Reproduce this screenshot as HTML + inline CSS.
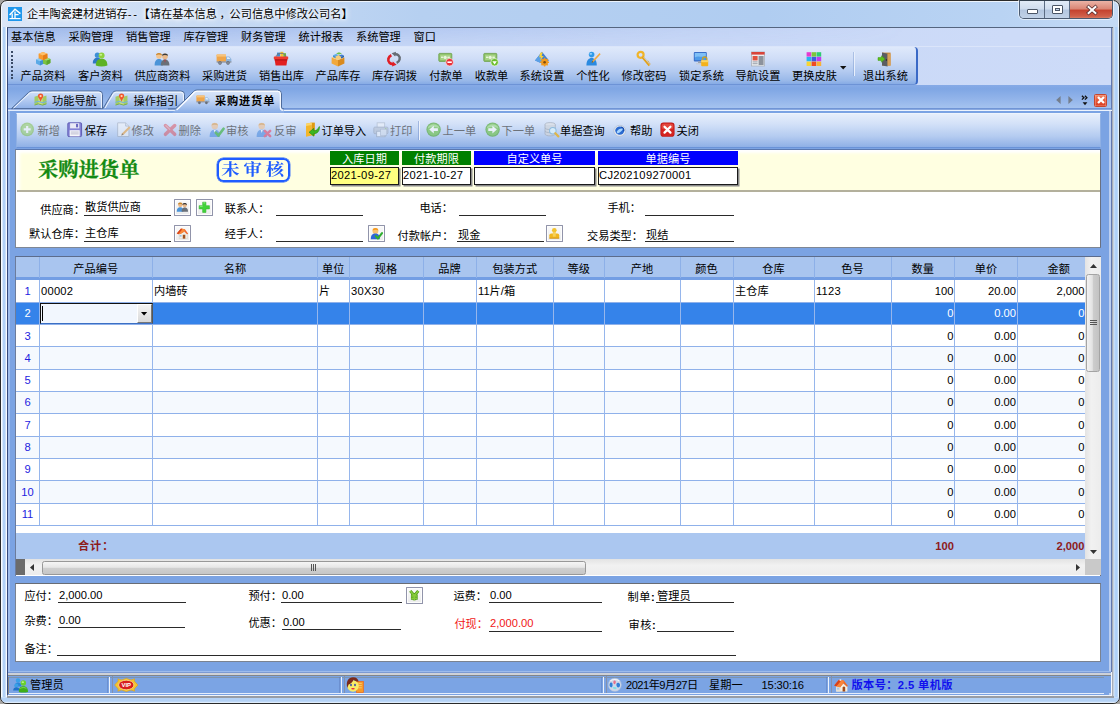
<!DOCTYPE html>
<html lang="zh-CN"><head><meta charset="utf-8"><title>企丰陶瓷建材进销存</title>
<style>
html,body{margin:0;padding:0}
body{width:1120px;height:704px;overflow:hidden;position:relative;background:#a7a5a3;font-family:"Liberation Sans","Noto Sans CJK SC",sans-serif;font-size:11.2px;color:#000;line-height:14px}
.a{position:absolute;box-sizing:border-box}
.t{white-space:nowrap;line-height:14px;height:14px}
.n{letter-spacing:.22px}
.c{transform:translateX(-50%)}
.g{color:#6c727b}
.b{font-weight:bold;letter-spacing:.9px}
.ul{border-bottom:1px solid #222}
svg{display:block;overflow:visible}
</style></head>
<body>
<div class="a" style="left:0px;top:0px;width:1120px;height:704px;border:1px solid #2a2a2a;border-radius:7px 7px 7px 7px;background:linear-gradient(to right,#dbe6f7 0,#cfdff5 120px,#b6d0f1 420px,#b0cdf1 760px,#b9d3f3 1000px,#c4daf5 1120px);box-shadow:inset 0 0 0 1px rgba(255,255,255,.75)"></div>
<div class="a" style="left:1px;top:27px;width:5.6px;height:671px;background:linear-gradient(to right,#fff 0,#f2f8fe 18%,#b2d1f6 36%,#b4d2f6 68%,#f4f9fe 86%,#fff 100%)"></div>
<div class="a" style="left:1113.4px;top:27px;width:5.6px;height:671px;background:linear-gradient(to right,#b4b8be 0,#d4e6fb 16%,#b2d2f8 34%,#aecff7 70%,#e4f2fe 90%,#f2fbff 100%)"></div>
<div class="a" style="left:1px;top:697px;width:1118px;height:6px;background:linear-gradient(to bottom,#cfe2f8 0,#b4d2f6 25%,#b4d2f6 70%,#eef6fe 100%);border-radius:0 0 6px 6px"></div>
<span class="a" style="left:8px;top:7px;line-height:0"><svg width="14" height="14" viewBox="0 0 14 14" ><rect x="0" y="0" width="14" height="14" fill="#1f97ec"/><path d="M1.6 8 L7 2.2 L12.4 6.6" fill="none" stroke="#fff" stroke-width="1.4"/><path d="M4.2 6.6 V11 M7 4.6 V11 M7 7.6 H10.6" fill="none" stroke="#fff" stroke-width="1.3"/><path d="M1.4 11.6 H12.6" stroke="#fff" stroke-width="1.2"/></svg></span>
<span class="a t" style="left:27px;top:7px;text-shadow:0 0 6px #fff,0 0 6px #fff,0 0 3px #fff">企丰陶瓷建材进销存<span style="letter-spacing:1.7px">--</span>【请在基本信息<span style="margin:0 -1.2px 0 2.6px">，</span>公司信息中修改公司名】</span>
<div class="a" style="left:1019px;top:0;width:94px;height:19px;border:1px solid #4b5a70;border-top-color:#33404f;border-radius:0 0 5px 5px;overflow:hidden;box-shadow:0 0 0 1px rgba(255,255,255,.55)"><div class="a" style="left:0;top:0;width:25px;height:18px;background:linear-gradient(to bottom,#e2ebf7 0,#cfdcee 45%,#b3c6df 50%,#c3d3e8 100%);border-right:1px solid #5b6b82"></div><div class="a" style="left:25px;top:0;width:25px;height:18px;background:linear-gradient(to bottom,#e2ebf7 0,#cfdcee 45%,#b3c6df 50%,#c3d3e8 100%);border-right:1px solid #5b6b82"></div><div class="a" style="left:50px;top:0;width:43px;height:18px;background:linear-gradient(to bottom,#eab3a6 0,#d98574 45%,#c4412d 50%,#d0604a 85%,#dc8a70 100%)"></div><div class="a" style="left:7px;top:8px;width:11px;height:5px;border:1px solid #4a5566;background:#fff;border-radius:1px"></div><div class="a" style="left:32px;top:4px;width:11px;height:9px;border:1px solid #4a5566;background:#fff;border-radius:1px"></div><div class="a" style="left:35px;top:7px;width:5px;height:3px;border:1px solid #4a5566;background:#c9d7ea"></div><span class="a" style="left:64.5px;top:3px;line-height:0"><svg width="14" height="12" viewBox="0 0 14 12" ><path d="M3.6 3 L10.4 9 M10.4 3 L3.6 9" stroke="#5a3030" stroke-width="3.6" stroke-linecap="square"/><path d="M3.6 3 L10.4 9 M10.4 3 L3.6 9" stroke="#fff" stroke-width="2" stroke-linecap="square"/></svg></span></div>
<div class="a" style="left:6.6px;top:27px;width:1106.4px;height:669px;border:1px solid #55657f;border-left:1.4px solid #36497a;border-right:0;border-bottom:1.2px solid #f0f5fc;background:#7ba3e3"></div>
<div class="a" style="left:6.6px;top:696px;width:1107px;height:1.6px;background:#979ca4"></div>
<div class="a" style="left:1109.3px;top:110px;width:1.4px;height:584.8px;background:#bccff0"></div>
<div class="a" style="left:8px;top:111px;width:1.8px;height:561px;background:#9fbdec"></div>
<div class="a" style="left:1110.7px;top:28px;width:1.5px;height:666.8px;background:#6278b0"></div>
<div class="a" style="left:1112.2px;top:28px;width:1.2px;height:668px;background:#a8aeb8"></div>
<div class="a" style="left:8px;top:28px;width:1102.7px;height:18px;background:linear-gradient(to right,#bbcef2 0,#c4d5f6 400px,#cddbf8 1000px)"></div>
<div class="a" style="left:8px;top:28px;width:900px;height:18px;background:linear-gradient(to bottom,rgba(105,145,220,.34) 0,rgba(105,145,220,.08) 70%,rgba(255,255,255,0) 100%);-webkit-mask-image:linear-gradient(to right,#000 0,rgba(0,0,0,.55) 40%,transparent 100%);mask-image:linear-gradient(to right,#000 0,rgba(0,0,0,.55) 40%,transparent 100%)"></div>
<span class="a t" style="left:11px;top:30px;">基本信息</span>
<span class="a t" style="left:68.5px;top:30px;">采购管理</span>
<span class="a t" style="left:126px;top:30px;">销售管理</span>
<span class="a t" style="left:183.5px;top:30px;">库存管理</span>
<span class="a t" style="left:241px;top:30px;">财务管理</span>
<span class="a t" style="left:298.5px;top:30px;">统计报表</span>
<span class="a t" style="left:356px;top:30px;">系统管理</span>
<span class="a t" style="left:413.5px;top:30px;">窗口</span>
<div class="a" style="left:8px;top:46px;width:1102.7px;height:39px;background:linear-gradient(to right,#c2d3f4 0,#cddbf8 100%)"></div>
<div class="a" style="left:8px;top:46px;width:1102.7px;height:1px;background:#dbe5fa"></div>
<div class="a" style="left:8px;top:47px;width:910px;height:38px;border-radius:0 4px 4px 0;background:linear-gradient(to bottom,#dfe9fb 0,#cfddf7 32%,#b3caf0 66%,#9ab9e9 90%,#86abe5 100%);border-right:2px solid #3a69c6;border-bottom:1px solid #6d93d6"></div>
<div class="a" style="left:11px;top:51px;width:2px;height:2px;background:#3a4a66"></div>
<div class="a" style="left:11px;top:54.75px;width:2px;height:2px;background:#3a4a66"></div>
<div class="a" style="left:11px;top:58.5px;width:2px;height:2px;background:#3a4a66"></div>
<div class="a" style="left:11px;top:62.25px;width:2px;height:2px;background:#3a4a66"></div>
<div class="a" style="left:11px;top:66px;width:2px;height:2px;background:#3a4a66"></div>
<div class="a" style="left:11px;top:69.75px;width:2px;height:2px;background:#3a4a66"></div>
<div class="a" style="left:11px;top:73.5px;width:2px;height:2px;background:#3a4a66"></div>
<div class="a" style="left:11px;top:77.25px;width:2px;height:2px;background:#3a4a66"></div>
<span class="a" style="left:34.5px;top:51px;line-height:0"><svg width="16" height="16" viewBox="0 0 16 16" ><path d="M1 8.6 L5 7 L9 8.6 V12.6 L5 14.6 L1 12.6Z" fill="#5aa9e6"/><path d="M1 8.6 L5 10.2 L9 8.6 L5 7Z" fill="#8fcaf3"/><path d="M5 10.2 V14.6 L9 12.6 V8.6Z" fill="#3f8fd4"/><path d="M8 8.2 L12 6.6 L15.4 8 V12 L11.6 14 L8 12.4Z" fill="#7cc242"/><path d="M11.6 9.6 V14 L15.4 12 V8Z" fill="#5da52c"/><path d="M8 8.2 L11.6 9.6 L15.4 8 L12 6.6Z" fill="#a6dc72"/><path d="M3.6 2.8 L8 1 L12.4 2.8 V7.2 L8 9.2 L3.6 7.2Z" fill="#f79a2e"/><path d="M3.6 2.8 L8 4.6 L12.4 2.8 L8 1Z" fill="#fdbf6a"/><path d="M8 4.6 V9.2 L12.4 7.2 V2.8Z" fill="#e67e17"/></svg></span>
<span class="a t c" style="left:43px;top:68.5px;">产品资料</span>
<span class="a" style="left:92px;top:51px;line-height:0"><svg width="16" height="16" viewBox="0 0 16 16" ><circle cx="5.4" cy="4.2" r="2.6" fill="#3d8fd6"/><path d="M0.8 12.4 C0.8 8 3.2 6.8 5.4 6.8 C7.6 6.8 9.6 8 9.6 12.4Z" fill="#2f78c2"/><circle cx="9.6" cy="4.6" r="3" fill="#8ed13e"/><path d="M3.8 14.6 C3.8 9.4 6.6 7.8 9.6 7.8 C12.6 7.8 15.4 9.4 15.4 14.6 C12 15.8 7 15.8 3.8 14.6Z" fill="#5db224"/><ellipse cx="8.8" cy="3.8" rx="1.4" ry="1" fill="#c8ee90"/></svg></span>
<span class="a t c" style="left:100.5px;top:68.5px;">客户资料</span>
<span class="a" style="left:154px;top:51px;line-height:0"><svg width="16" height="16" viewBox="0 0 16 16" ><circle cx="5" cy="5" r="2.8" fill="#f3c48e"/><path d="M2 4.2 C2 1.4 8 1.4 8 4.4 C6.4 3.4 4 3.2 2 4.2Z" fill="#c8862c"/><path d="M0.6 14.4 C0.6 9.6 2.6 8 5 8 C7.4 8 9 9.6 9 14.4Z" fill="#4b94d8"/><circle cx="11" cy="5.4" r="2.8" fill="#e9b98a"/><path d="M8 4.8 C8 1.6 14 1.6 14 4.8 C12.4 3.8 9.8 3.6 8 4.8Z" fill="#3a3a3a"/><path d="M6.8 14.6 C6.8 10 8.6 8.4 11 8.4 C13.4 8.4 15.4 10 15.4 14.6Z" fill="#6a7078"/><path d="M10.4 8.6 L11 12 L11.6 8.6Z" fill="#c33"/></svg></span>
<span class="a t c" style="left:162.5px;top:68.5px;">供应商资料</span>
<span class="a" style="left:216px;top:51px;line-height:0"><svg width="16" height="16" viewBox="0 0 16 16" ><rect x="0.6" y="3.4" width="9.4" height="7.4" rx="0.8" fill="#f0a64a"/><rect x="0.6" y="3.4" width="9.4" height="2.2" fill="#f7c47c"/><path d="M10 5.4 H13.4 L15.4 8 V10.8 H10Z" fill="#8fb4dc"/><path d="M11 6.2 H13 L14.4 8 H11Z" fill="#dcebf8"/><rect x="0.6" y="10.4" width="14.8" height="1.2" fill="#8a8f98"/><circle cx="4" cy="12" r="1.7" fill="#555b66"/><circle cx="12" cy="12" r="1.7" fill="#555b66"/><circle cx="4" cy="12" r="0.7" fill="#cfd4da"/><circle cx="12" cy="12" r="0.7" fill="#cfd4da"/></svg></span>
<span class="a t c" style="left:224.5px;top:68.5px;">采购进货</span>
<span class="a" style="left:273px;top:51px;line-height:0"><svg width="16" height="16" viewBox="0 0 16 16" ><rect x="4" y="1.6" width="3" height="4" fill="#3f8fd4"/><rect x="7.4" y="0.8" width="3" height="5" fill="#f0c330"/><rect x="10.4" y="2.2" width="2.6" height="4" fill="#6cbf3a"/><path d="M3 6 C3 1 13 1 13 6" fill="none" stroke="#777" stroke-width="1"/><rect x="0.8" y="5.4" width="14.4" height="2.8" rx="0.6" fill="#f03a2e"/><path d="M1.6 8.2 H14.4 L13.4 14.6 H2.6Z" fill="#e21f1f"/><path d="M1.6 8.2 H14.4 L14.2 9.6 H1.8Z" fill="#b31313"/></svg></span>
<span class="a t c" style="left:281.5px;top:68.5px;">销售出库</span>
<span class="a" style="left:329.5px;top:51px;line-height:0"><svg width="16" height="16" viewBox="0 0 16 16" ><path d="M1.6 6.4 L8 9 V15.4 L1.6 12.6Z" fill="#f2a93c"/><path d="M8 9 L14.4 6.4 V12.6 L8 15.4Z" fill="#d98a1e"/><path d="M1.6 6.4 L8 3.8 L14.4 6.4 L8 9Z" fill="#f8cc7a"/><path d="M3 4.2 L6 3 L8.6 4 L5.6 5.4Z" fill="#5aa9e6"/><path d="M6 2.4 L9 1.2 L12 2.4 L9 3.6Z" fill="#6cc04a"/><path d="M8.8 4.6 L11.8 3.4 L14 4.4 L11 5.8Z" fill="#3d7fd0"/><path d="M3 4.2 V6 L5.6 7.2 V5.4Z" fill="#3f8fd4"/><path d="M11 5.8 V7.4 L14 6.2 V4.4Z" fill="#2c62b0"/></svg></span>
<span class="a t c" style="left:338px;top:68.5px;">产品库存</span>
<span class="a" style="left:386px;top:51px;line-height:0"><svg width="16" height="16" viewBox="0 0 16 16" ><path d="M8.4 3.4 C11.6 2.6 14.4 5 13.6 8.4 C13.2 10 12 11.2 10.6 11.8" fill="none" stroke="#666c74" stroke-width="2.4"/><path d="M5.6 2.2 L10 0.8 L9.2 5.6Z" fill="#666c74"/><path d="M7.6 12.8 C4.4 13.6 1.6 11 2.4 7.6 C2.8 6 4 4.8 5.4 4.2" fill="none" stroke="#e01f26" stroke-width="2.6"/><path d="M10.6 13.8 L6 15.4 L6.8 10.4Z" fill="#e01f26"/></svg></span>
<span class="a t c" style="left:394.5px;top:68.5px;">库存调拨</span>
<span class="a" style="left:437.5px;top:51px;line-height:0"><svg width="16" height="16" viewBox="0 0 16 16" ><rect x="0.8" y="2.4" width="13" height="8" rx="0.8" fill="#8fc26a" stroke="#6aa046" stroke-width="0.8"/><rect x="2.2" y="3.8" width="10.2" height="5.2" fill="#a9d487"/><circle cx="7.2" cy="6.4" r="1.6" fill="#e8f5da"/><rect x="3" y="5.6" width="2.4" height="1.4" fill="#e8f5da"/><rect x="9.4" y="5.6" width="2.4" height="1.4" fill="#e8f5da"/><circle cx="11.6" cy="11.2" r="3.8" fill="#e8303a" stroke="#fff" stroke-width="0.6"/><rect x="9.4" y="10.4" width="4.4" height="1.6" fill="#fff"/></svg></span>
<span class="a t c" style="left:446px;top:68.5px;">付款单</span>
<span class="a" style="left:483px;top:51px;line-height:0"><svg width="16" height="16" viewBox="0 0 16 16" ><rect x="0.8" y="2.4" width="13" height="8" rx="0.8" fill="#8fc26a" stroke="#6aa046" stroke-width="0.8"/><rect x="2.2" y="3.8" width="10.2" height="5.2" fill="#a9d487"/><circle cx="7.2" cy="6.4" r="1.6" fill="#e8f5da"/><rect x="3" y="5.6" width="2.4" height="1.4" fill="#e8f5da"/><rect x="9.4" y="5.6" width="2.4" height="1.4" fill="#e8f5da"/><circle cx="11.6" cy="11.2" r="3.8" fill="#6cbe2e" stroke="#fff" stroke-width="0.6"/><path d="M9.4 10.2 H13.8 L11.6 13.6Z" fill="#fff"/></svg></span>
<span class="a t c" style="left:491.5px;top:68.5px;">收款单</span>
<span class="a" style="left:533.5px;top:51px;line-height:0"><svg width="16" height="16" viewBox="0 0 16 16" ><path d="M8 0.8 L15 9.6 L8 12.4 L1 9.6Z" fill="#3f7fd0"/><path d="M8 0.8 L8 12.4 L1 9.6Z" fill="#5aa0e6"/><path d="M6.2 1.8 L8.8 1.2 L7.6 5 L9.8 5 L6 9.6 L7 6.2 L5.2 6.2Z" fill="#f6d13a"/><circle cx="10.6" cy="11.2" r="3.4" fill="#f29a1e"/><circle cx="10.6" cy="11.2" r="1.3" fill="#7a4a10"/><path d="M10.6 6.8 V15.6 M6.2 11.2 H15 M7.5 8.1 L13.7 14.3 M13.7 8.1 L7.5 14.3" stroke="#f29a1e" stroke-width="1.5"/><circle cx="10.6" cy="11.2" r="1.3" fill="#7a4a10"/></svg></span>
<span class="a t c" style="left:542px;top:68.5px;">系统设置</span>
<span class="a" style="left:584.5px;top:51px;line-height:0"><svg width="16" height="16" viewBox="0 0 16 16" ><circle cx="6.6" cy="3.6" r="2.8" fill="#2f9ae8"/><path d="M1.4 14.6 C1.4 9 3.8 7 6.6 7 C9.4 7 11.8 9 11.8 14.6Z" fill="#2b8ae0"/><ellipse cx="5.8" cy="2.8" rx="1.4" ry="0.9" fill="#9ad3fb"/><path d="M14.6 2 L15.6 3.2 L8.4 11 L6.6 11.8 L7.2 10Z" fill="#f2a93c"/><path d="M6.6 11.8 L7.2 10 L8.4 11Z" fill="#5a4a2a"/></svg></span>
<span class="a t c" style="left:593px;top:68.5px;">个性化</span>
<span class="a" style="left:635.5px;top:51px;line-height:0"><svg width="16" height="16" viewBox="0 0 16 16" ><circle cx="4.6" cy="3.8" r="3" fill="none" stroke="#f0b429" stroke-width="2.2"/><path d="M6.4 6 L13.6 14.4" stroke="#e3a21a" stroke-width="2.4"/><path d="M10.4 11.6 L12.4 10 M12 13.6 L14 12" stroke="#e3a21a" stroke-width="1.6"/><path d="M7.6 6.2 L14.4 14" stroke="#c9cdd4" stroke-width="0.9"/></svg></span>
<span class="a t c" style="left:644px;top:68.5px;">修改密码</span>
<span class="a" style="left:693px;top:51px;line-height:0"><svg width="16" height="16" viewBox="0 0 16 16" ><rect x="0.8" y="1" width="13" height="9.4" rx="1" fill="#3a6fc8"/><rect x="1.8" y="2" width="11" height="7.2" fill="#4f9be8"/><path d="M1.8 2 H12.8 V5 C9 7 5 4 1.8 6.4Z" fill="#7fc0f6"/><rect x="5" y="10.4" width="4.6" height="1.8" fill="#9aa3b0"/><rect x="3" y="12" width="8.6" height="1.4" rx="0.6" fill="#c7ccd4"/><path d="M9.6 9.4 V7.8 C9.6 5.4 13.8 5.4 13.8 7.8 V9.4" fill="none" stroke="#c9a227" stroke-width="1.4"/><rect x="8.2" y="9.2" width="7" height="6" rx="0.8" fill="#f4b21c"/><rect x="8.2" y="9.2" width="7" height="2" fill="#fad565"/></svg></span>
<span class="a t c" style="left:701.5px;top:68.5px;">锁定系统</span>
<span class="a" style="left:749.5px;top:51px;line-height:0"><svg width="16" height="16" viewBox="0 0 16 16" ><rect x="1.4" y="1" width="13.2" height="14" fill="#eceef1" stroke="#a9afb8" stroke-width="0.8"/><rect x="1.4" y="1" width="13.2" height="2.6" fill="#d8443a"/><rect x="2.6" y="5" width="5" height="4.4" fill="#e0523f"/><rect x="8.6" y="5" width="5" height="9" fill="#8c929c"/><rect x="2.6" y="10.4" width="5" height="1" fill="#9aa0aa"/><rect x="2.6" y="12.2" width="5" height="1" fill="#9aa0aa"/></svg></span>
<span class="a t c" style="left:758px;top:68.5px;">导航设置</span>
<span class="a" style="left:806px;top:51px;line-height:0"><svg width="16" height="16" viewBox="0 0 16 16" ><rect x="0.6" y="1.2" width="4.6" height="4.4" fill="#e63ad0"/><rect x="5.6" y="1.2" width="4.6" height="4.4" fill="#7dc63a"/><rect x="10.6" y="1.2" width="4.6" height="4.4" fill="#2ecc71"/><rect x="0.6" y="5.9" width="4.6" height="4.4" fill="#29b4f0"/><rect x="5.6" y="5.9" width="4.6" height="4.4" fill="#3d5be0"/><rect x="10.6" y="5.9" width="4.6" height="4.4" fill="#c03bf0"/><rect x="0.6" y="10.6" width="4.6" height="4.4" fill="#f8d531"/><rect x="5.6" y="10.6" width="4.6" height="4.4" fill="#f04a22"/><rect x="10.6" y="10.6" width="4.6" height="4.4" fill="#fbb034"/></svg></span>
<span class="a t c" style="left:814.5px;top:68.5px;">更换皮肤</span>
<span class="a" style="left:877px;top:51px;line-height:0"><svg width="16" height="16" viewBox="0 0 16 16" ><path d="M5 1.6 H13.6 V14.6 H5Z" fill="#c98a3e"/><path d="M5 1.6 L10.6 2.8 V15.4 L5 14.6Z" fill="#5b5e63"/><path d="M10.6 2.8 H13.6 V14.6 H10.6Z" fill="#d9a25a"/><circle cx="9.4" cy="9" r="0.7" fill="#222"/><path d="M1 6.6 H4.4 V4.8 L8 8 L4.4 11.2 V9.4 H1Z" fill="#5fc21e" stroke="#3f9a10" stroke-width="0.5"/></svg></span>
<span class="a t c" style="left:885.5px;top:68.5px;">退出系统</span>
<span class="a" style="left:840.2px;top:66px;line-height:0"><svg width="6.4" height="3.6" viewBox="0 0 6.4 3.6"><path d="M0 0 H6.4 L3.2 3.6Z" fill="#111"/></svg></span>
<div class="a" style="left:853.5px;top:52px;width:1.4px;height:24px;background:#e9f0fc;box-shadow:-1px 0 0 rgba(120,150,205,.45)"></div>
<div class="a" style="left:8px;top:85px;width:1102.7px;height:25px;background:linear-gradient(to bottom,#86aae6 0,#7fa6e4 15%,#92b4ea 55%,#a9c6f0 100%)"></div>
<span class="a" style="left:8px;top:85px;line-height:0"><svg width="1104" height="28" viewBox="0 0 1104 28" ><defs><linearGradient id="tg" x1="0" y1="0" x2="0" y2="1"><stop offset="0" stop-color="#d3e2f8"/><stop offset="0.5" stop-color="#b4cbf1"/><stop offset="1" stop-color="#8fb1e8"/></linearGradient><linearGradient id="ta" x1="0" y1="0" x2="0" y2="1"><stop offset="0" stop-color="#dbe7fa"/><stop offset="0.45" stop-color="#c3d6f5"/><stop offset="1" stop-color="#86abe6"/></linearGradient></defs><rect x="0" y="23.2" width="168" height="1.3" fill="#5a82cc"/><rect x="0" y="24.7" width="168" height="1.2" fill="#eef4fd"/><rect x="275" y="23.3" width="829" height="1.4" fill="#5a82cc"/><rect x="275" y="24.8" width="829" height="1.2" fill="#eef4fd"/><path d="M3.5 23.6 L20.5 7.5 Q22 6 24 6 H91 Q94.5 6 94.5 9.5 V23.6Z" fill="url(#tg)" stroke="#4e6c9c" stroke-width="1"/><path d="M5.6 23.2 L21.4 8.3 Q22.4 7.2 24 7.2 H91 Q93.4 7.2 93.4 9.6 V23.2" fill="none" stroke="#f2f7fe" stroke-width="1"/><path d="M95 23.6 L99.5 16 L104.6 7.6 Q105.8 6 108 6 H173 Q176.5 6 176.5 9.5 V20 L168 23.6Z" fill="url(#tg)"/><path d="M95 23.6 L99.5 16 L104.6 7.6 Q105.8 6 108 6 H173 Q176.5 6 176.5 9.5 V16" fill="none" stroke="#4e6c9c" stroke-width="1"/><path d="M97 23.2 L101 16.2 L105.8 8.4 Q106.8 7.2 108.4 7.2 H173 Q175.4 7.2 175.4 9.6 V17" fill="none" stroke="#f2f7fe" stroke-width="1"/><path d="M164 28 L168 24.7 L177 15 L185.5 6.5 Q187 5 189 5 H269.5 Q273.5 5 273.5 9 V22 Q273.5 24.3 276 24.3 V28Z" fill="url(#ta)"/><path d="M160 23.9 H167.4 L177 15 L185.5 6.5 Q187 5 189 5 H269.5 Q273.5 5 273.5 9 V22 Q273.5 24 276 24" fill="none" stroke="#4e6c9c" stroke-width="1"/><path d="M168.6 25.2 L178 16 L186.4 7.4 Q187.4 6.3 189 6.3 H269.4 Q272.3 6.3 272.3 9.2 V22.4 Q272.3 25.3 275.4 25.3" fill="none" stroke="#fff" stroke-width="1.1"/></svg></span>
<span class="a t" style="left:52px;top:94px;">功能导航</span>
<span class="a t" style="left:133.5px;top:94px;">操作指引</span>
<span class="a t" style="left:215px;top:93.5px;font-weight:bold;letter-spacing:.85px">采购进货单</span>
<span class="a" style="left:33.5px;top:93.3px;line-height:0"><svg width="13" height="13" viewBox="0 0 15 15" ><path d="M0.6 4.4 L5 3 L10 4.4 L14.4 3 V12.6 L10 14 L5 12.6 L0.6 14Z" fill="#a4cc62"/><path d="M5 3 L10 4.4 V14 L5 12.6Z" fill="#c6dc82"/><path d="M0.6 10.4 L5 9 L10 10.6 L14.4 9.2 V10.4 L10 11.8 L5 10.2 L0.6 11.6Z" fill="#6fb1e0"/><path d="M0.6 14 L5 12.6 L10 14 L14.4 12.6" fill="none" stroke="#6aa23a" stroke-width="0.8"/><path d="M7.6 0.6 C5.4 0.6 4.4 2.2 4.6 3.8 C4.8 5.6 6.8 7 7.6 10 C8.4 7 10.4 5.6 10.6 3.8 C10.8 2.2 9.8 0.6 7.6 0.6Z" fill="#f0562a"/><circle cx="7.6" cy="3.6" r="1.3" fill="#ffd9b0"/></svg></span>
<span class="a" style="left:115px;top:93.3px;line-height:0"><svg width="13" height="13" viewBox="0 0 15 15" ><path d="M0.6 4.4 L5 3 L10 4.4 L14.4 3 V12.6 L10 14 L5 12.6 L0.6 14Z" fill="#a4cc62"/><path d="M5 3 L10 4.4 V14 L5 12.6Z" fill="#c6dc82"/><path d="M0.6 10.4 L5 9 L10 10.6 L14.4 9.2 V10.4 L10 11.8 L5 10.2 L0.6 11.6Z" fill="#6fb1e0"/><path d="M0.6 14 L5 12.6 L10 14 L14.4 12.6" fill="none" stroke="#6aa23a" stroke-width="0.8"/><path d="M7.6 0.6 C5.4 0.6 4.4 2.2 4.6 3.8 C4.8 5.6 6.8 7 7.6 10 C8.4 7 10.4 5.6 10.6 3.8 C10.8 2.2 9.8 0.6 7.6 0.6Z" fill="#f0562a"/><circle cx="7.6" cy="3.6" r="1.3" fill="#ffd9b0"/></svg></span>
<span class="a" style="left:196.3px;top:94.6px;line-height:0"><svg width="14" height="10" viewBox="0 0 14 10" ><rect x="0.4" y="0.6" width="8.4" height="6.2" rx="0.7" fill="#f0a64a"/><rect x="0.4" y="0.6" width="8.4" height="1.8" fill="#f7c47c"/><path d="M8.8 2.2 H11.6 L13.4 4.4 V6.8 H8.8Z" fill="#9fc0e4"/><path d="M9.6 2.9 H11.3 L12.5 4.4 H9.6Z" fill="#e6f0fa"/><rect x="0.4" y="6.4" width="13" height="1" fill="#8a8f98"/><circle cx="3.4" cy="7.8" r="1.4" fill="#6a707a"/><circle cx="10.4" cy="7.8" r="1.4" fill="#6a707a"/></svg></span>
<span class="a" style="left:1055.6px;top:96px;line-height:0"><svg width="5" height="8" viewBox="0 0 5 8" ><path d="M4.6 0 V8 L0.2 4Z" fill="#747e8c"/></svg></span><span class="a" style="left:1068.4px;top:96px;line-height:0"><svg width="5" height="8" viewBox="0 0 5 8" ><path d="M0.4 0 V8 L4.8 4Z" fill="#747e8c"/></svg></span><span class="a" style="left:1080.6px;top:94.8px;line-height:0"><svg width="7" height="11" viewBox="0 0 7 11" ><path d="M0.9 0.8 L2.9 2.7 L0.9 4.6 M3.9 0.8 L5.9 2.7 L3.9 4.6" fill="none" stroke="#111" stroke-width="1.3"/><path d="M1.6 7.2 H6.4 L4 10.2Z" fill="#111"/></svg></span><div class="a" style="left:1094px;top:94px;width:13.1px;height:12.8px;background:linear-gradient(to bottom,#f08462 0,#e65a3a 45%,#da3c22 100%);border:1px solid #c8452c;border-radius:1.5px;box-shadow:inset 0 0 0 .6px rgba(255,200,180,.55)"></div><span class="a" style="left:1096.6px;top:96.4px;line-height:0"><svg width="8" height="8" viewBox="0 0 8 8" ><path d="M1 1 L7 7 M7 1 L1 7" stroke="#fff" stroke-width="2.3"/></svg></span>
<div class="a" style="left:15.6px;top:113px;width:1085.7px;height:35px;background:linear-gradient(to bottom,#e6eefb 0,#d3e1f8 30%,#b4cbf0 68%,#8fb0e6 100%);border:1px solid #8fb0e4;border-top-color:#eef4fd;border-bottom-color:#6a93d8"></div>
<span class="a" style="left:20px;top:122.4px;line-height:0"><svg width="15.4" height="15.4" viewBox="0 0 15 15" ><g opacity="0.55"><circle cx="7" cy="7.2" r="6.6" fill="#7fbe48"/><circle cx="7" cy="7.2" r="5.4" fill="#94cf62"/><path d="M7 3.8 V10.6 M3.6 7.2 H10.4" stroke="#fff" stroke-width="2.1"/></g></svg></span>
<span class="a t g" style="left:37.5px;top:123.6px;">新增</span>
<span class="a" style="left:67px;top:122.4px;line-height:0"><svg width="15.4" height="15.4" viewBox="0 0 15 15" ><g ><rect x="0.8" y="0.8" width="13.4" height="13.4" rx="1" fill="#8583d6" stroke="#5a58b0" stroke-width="0.9"/><rect x="3" y="1.2" width="9" height="5" fill="#e9e9f6"/><rect x="8.8" y="1.8" width="2" height="3.4" fill="#6a68c0"/><rect x="2.6" y="8" width="9.8" height="6" fill="#f7f7fb"/><path d="M3.6 9.8 H11.4 M3.6 11.6 H11.4" stroke="#aeb0c8" stroke-width="0.8"/></g></svg></span>
<span class="a t" style="left:84.8px;top:123.6px;">保存</span>
<span class="a" style="left:116px;top:122.4px;line-height:0"><svg width="15.4" height="15.4" viewBox="0 0 15 15" ><g opacity="0.55"><path d="M1.6 0.8 H9.4 L12.6 4 V14.2 H1.6Z" fill="#f4f6f9" stroke="#9aa4b4" stroke-width="0.9"/><path d="M9.4 0.8 V4 H12.6" fill="#dfe5ee" stroke="#9aa4b4" stroke-width="0.8"/><path d="M12.8 4.2 L14.2 5.6 L7.4 12.4 L5.2 13.2 L6 11Z" fill="#f0a030"/><path d="M5.2 13.2 L6 11 L7.4 12.4Z" fill="#6a4a20"/></g></svg></span>
<span class="a t g" style="left:131.5px;top:123.6px;">修改</span>
<span class="a" style="left:162.5px;top:122.4px;line-height:0"><svg width="15.4" height="15.4" viewBox="0 0 15 15" ><g opacity="0.42"><path d="M2.4 3.4 L11.4 12 M11.4 3.4 L2.4 12" stroke="#e0303a" stroke-width="3.4" stroke-linecap="round"/><path d="M2.8 3.6 L6.6 7.2" stroke="#f58a8a" stroke-width="1.1" stroke-linecap="round"/></g></svg></span>
<span class="a t g" style="left:178.5px;top:123.6px;">删除</span>
<span class="a" style="left:209px;top:122.4px;line-height:0"><svg width="15.4" height="15.4" viewBox="0 0 15 15" ><g opacity="0.6"><circle cx="5.6" cy="4" r="3.2" fill="#f0c090"/><path d="M2.4 3.4 C2.6 0.2 8.6 0.2 8.8 3.4 C7 2.4 4.4 2.4 2.4 3.4Z" fill="#d89a4a"/><path d="M0.6 14.6 C0.6 9.4 2.8 7.6 5.6 7.6 C8.4 7.6 10.6 9.4 10.6 14.6Z" fill="#4f8fe0"/><path d="M4.6 7.8 L5.6 10.6 L6.6 7.8Z" fill="#fff"/><path d="M6.6 10.4 L9.2 13.2 L14.2 6.6" fill="none" stroke="#2fae2f" stroke-width="2.6" stroke-linecap="round" stroke-linejoin="round"/></g></svg></span>
<span class="a t g" style="left:226px;top:123.6px;">审核</span>
<span class="a" style="left:256px;top:122.4px;line-height:0"><svg width="15.4" height="15.4" viewBox="0 0 15 15" ><g opacity="0.6"><circle cx="5.6" cy="4" r="3.2" fill="#f0c090"/><path d="M2.4 3.4 C2.6 0.2 8.6 0.2 8.8 3.4 C7 2.4 4.4 2.4 2.4 3.4Z" fill="#d89a4a"/><path d="M0.6 14.6 C0.6 9.4 2.8 7.6 5.6 7.6 C8.4 7.6 10.6 9.4 10.6 14.6Z" fill="#4f8fe0"/><path d="M4.6 7.8 L5.6 10.6 L6.6 7.8Z" fill="#fff"/><path d="M8.6 8.6 L13.8 13.8 M13.8 8.6 L8.6 13.8" stroke="#e6486a" stroke-width="2.5" stroke-linecap="round"/></g></svg></span>
<span class="a t g" style="left:274px;top:123.6px;">反审</span>
<span class="a" style="left:305px;top:122.4px;line-height:0"><svg width="15.4" height="15.4" viewBox="0 0 15 15" ><g ><path d="M1 1.6 L6.6 0.6 V13.2 L1 14.4Z" fill="#f4b62a"/><path d="M6.6 0.6 H9.6 V13.2 H6.6Z" fill="#e09a10"/><path d="M1 1.6 L6.6 0.6 L6.6 3 L1 4Z" fill="#fbd56a"/><path d="M14 4.4 C14.4 9 12 11.4 8.6 11.4 V13.8 L4 10 L8.6 6.2 V8.6 C10.6 8.6 12.6 7.4 14 4.4Z" fill="#3cb521" stroke="#1f8a0c" stroke-width="0.6"/></g></svg></span>
<span class="a t" style="left:321.5px;top:123.6px;">订单导入</span>
<span class="a" style="left:372.5px;top:122.4px;line-height:0"><svg width="15.4" height="15.4" viewBox="0 0 15 15" ><g opacity="0.5"><rect x="4" y="0.8" width="7.4" height="5" fill="#f4f6f9" stroke="#9aa4b4" stroke-width="0.8"/><rect x="0.8" y="5" width="13.8" height="6.4" rx="1" fill="#b8c0cc" stroke="#8791a1" stroke-width="0.8"/><rect x="3.6" y="9" width="8.2" height="5.4" fill="#fff" stroke="#8791a1" stroke-width="0.8"/><circle cx="12.4" cy="7" r="0.8" fill="#5fc21e"/><rect x="7.4" y="7" width="6" height="6" fill="#dfe4ec" stroke="#9aa4b4" stroke-width="0.6"/></g></svg></span>
<span class="a t g" style="left:390px;top:123.6px;">打印</span>
<span class="a" style="left:426px;top:122.4px;line-height:0"><svg width="15.4" height="15.4" viewBox="0 0 15 15" ><g opacity="0.62"><circle cx="7.4" cy="7.4" r="7" fill="#4aa32a"/><circle cx="7.4" cy="7.4" r="6" fill="#6cc244"/><path d="M1.6 6 C3 1.4 11.8 1.4 13.2 6 C10 4.4 5 4.4 1.6 6Z" fill="#a6e08a" opacity=".8"/><path d="M3.2 7.4 L7.6 3.6 V6 H11.6 V8.8 H7.6 V11.2Z" fill="#fff"/></g></svg></span>
<span class="a t g" style="left:442.5px;top:123.6px;">上一单</span>
<span class="a" style="left:485px;top:122.4px;line-height:0"><svg width="15.4" height="15.4" viewBox="0 0 15 15" ><g opacity="0.62"><circle cx="7.4" cy="7.4" r="7" fill="#4aa32a"/><circle cx="7.4" cy="7.4" r="6" fill="#6cc244"/><path d="M1.6 6 C3 1.4 11.8 1.4 13.2 6 C10 4.4 5 4.4 1.6 6Z" fill="#a6e08a" opacity=".8"/><path d="M11.6 7.4 L7.2 3.6 V6 H3.2 V8.8 H7.2 V11.2Z" fill="#fff"/></g></svg></span>
<span class="a t g" style="left:501.5px;top:123.6px;">下一单</span>
<span class="a" style="left:544px;top:122.4px;line-height:0"><svg width="15.4" height="15.4" viewBox="0 0 15 15" ><g opacity="0.8"><ellipse cx="6" cy="2.6" rx="5" ry="2" fill="#dfe3ea" stroke="#9aa2b0" stroke-width="0.7"/><path d="M1 2.6 V11.6 C1 14.2 11 14.2 11 11.6 V2.6" fill="#cfd5de" stroke="#9aa2b0" stroke-width="0.7"/><path d="M1 5.6 C1 8 11 8 11 5.6 M1 8.6 C1 11 11 11 11 8.6" fill="none" stroke="#9aa2b0" stroke-width="0.7"/><circle cx="8.6" cy="8.6" r="3.2" fill="#d9f0fb" stroke="#7fb4d8" stroke-width="1"/><path d="M11 11 L14 14" stroke="#e8b020" stroke-width="2.2" stroke-linecap="round"/></g></svg></span>
<span class="a t" style="left:560px;top:123.6px;">单据查询</span>
<span class="a" style="left:613px;top:122.4px;line-height:0"><svg width="15.4" height="15.4" viewBox="0 0 15 15" ><g ><ellipse cx="6.6" cy="8.6" rx="5.8" ry="5.4" fill="#e4e9f2" stroke="#b4bfd0" stroke-width="0.7"/><ellipse cx="6.6" cy="8.4" rx="4.4" ry="4.1" fill="#2a6ad0"/><path d="M3.6 9.6 C4.6 6.8 8 5.8 9.8 6.4 C9 8.6 7 10.6 4.2 11.2Z" fill="#a8d6ff"/><path d="M8 4.8 C9.8 5.4 10.8 7.2 10.4 9" fill="none" stroke="#174aa8" stroke-width="1.1"/></g></svg></span>
<span class="a t" style="left:630px;top:123.6px;">帮助</span>
<span class="a" style="left:659.5px;top:122.4px;line-height:0"><svg width="15.4" height="15.4" viewBox="0 0 15 15" ><g ><rect x="0.4" y="0.6" width="13.8" height="13.8" rx="3" fill="#c01a18"/><rect x="1.1" y="1.3" width="12.4" height="12.4" rx="2.4" fill="#d42420"/><rect x="1.6" y="1.6" width="11.4" height="5.4" rx="2.2" fill="#e8584c" opacity=".7"/><path d="M4.4 4.6 L10.2 10.4 M10.2 4.6 L4.4 10.4" stroke="#fff" stroke-width="2.2" stroke-linecap="round"/></g></svg></span>
<span class="a t" style="left:676.5px;top:123.6px;">关闭</span>
<div class="a" style="left:419.2px;top:121px;width:1.2px;height:19px;background:#eef3fc;box-shadow:-1px 0 0 rgba(110,140,200,.5)"></div>
<div class="a" style="left:15px;top:149px;width:1086.3px;height:99px;background:#fff;border:1px solid #7f8794;border-top-color:#5a78b0;border-right-color:#6a7080"></div>
<div class="a" style="left:17px;top:150.5px;width:1083.3px;height:41.5px;background:#ffffe1;border-bottom:2px solid #b3b09c;box-shadow:inset 4px 3px 3px -1px #fff"></div>
<span class="a t" style="left:38px;top:159px;font-family:'Liberation Serif','Noto Serif CJK SC',serif;font-weight:700;font-size:20.3px;line-height:22px;height:22px;color:#128a12;-webkit-text-stroke:.3px #128a12">采购进货单</span>
<div class="a" style="left:217px;top:158px;width:72.6px;height:24.2px;border:2px solid #1f5cff;border-radius:6.5px;box-shadow:0 0 0 .4px #1f5cff"></div>
<span class="a t" style="left:221.3px;top:159px;font-family:'Liberation Serif','Noto Serif CJK SC',serif;font-size:18.3px;font-weight:700;line-height:22px;height:22px;color:#1f5cff;letter-spacing:4px;transform:scaleY(.86);transform-origin:50% 50%">未审核</span>
<div class="a" style="left:330px;top:151.4px;width:69px;height:13.8px;background:#008000;color:#fff;text-align:center;line-height:17.6px;overflow:hidden;white-space:nowrap">入库日期</div>
<div class="a" style="left:330px;top:167px;width:69px;height:18px;background:#ffff80;border:1px solid #1a1a1a;box-shadow:1.5px 1.5px 0 #8a8a8a;line-height:15.5px;padding-left:0;letter-spacing:.3px;white-space:nowrap">2021-09-27</div>
<div class="a" style="left:402px;top:151.4px;width:69px;height:13.8px;background:#008000;color:#fff;text-align:center;line-height:17.6px;overflow:hidden;white-space:nowrap">付款期限</div>
<div class="a" style="left:402px;top:167px;width:69px;height:18px;background:#fff;border:1px solid #1a1a1a;box-shadow:1.5px 1.5px 0 #8a8a8a;line-height:15.5px;padding-left:0;letter-spacing:.3px;white-space:nowrap">2021-10-27</div>
<div class="a" style="left:474px;top:151.4px;width:121px;height:13.8px;background:#0000ff;color:#fff;text-align:center;line-height:17.6px;overflow:hidden;white-space:nowrap">自定义单号</div>
<div class="a" style="left:474px;top:167px;width:121px;height:18px;background:#fff;border:1px solid #1a1a1a;box-shadow:1.5px 1.5px 0 #8a8a8a;line-height:15.5px;padding-left:0;letter-spacing:.3px;white-space:nowrap"></div>
<div class="a" style="left:598px;top:151.4px;width:140px;height:13.8px;background:#0000ff;color:#fff;text-align:center;line-height:17.6px;overflow:hidden;white-space:nowrap">单据编号</div>
<div class="a" style="left:598px;top:167px;width:140px;height:18px;background:#fff;border:1px solid #1a1a1a;box-shadow:1.5px 1.5px 0 #8a8a8a;line-height:15.5px;padding-left:0;letter-spacing:.3px;white-space:nowrap">CJ202109270001</div>
<span class="a t" style="right:1035px;top:203.4px;">供应商：</span>
<span class="a t" style="left:85px;top:199.6px;">散货供应商</span>
<div class="a" style="left:84px;top:215px;width:87px;height:1.3px;background:#2a2a2a"></div>
<span class="a t" style="right:1035px;top:227px;">默认仓库：</span>
<span class="a t" style="left:85px;top:226px;">主仓库</span>
<div class="a" style="left:84px;top:241px;width:87px;height:1.3px;background:#2a2a2a"></div>
<span class="a t" style="right:850.5px;top:201.7px;">联系人：</span>
<div class="a" style="left:276px;top:215px;width:87px;height:1.3px;background:#2a2a2a"></div>
<span class="a t" style="right:850.5px;top:227px;">经手人：</span>
<div class="a" style="left:276px;top:241px;width:87px;height:1.3px;background:#2a2a2a"></div>
<span class="a t" style="right:667px;top:201px;">电话：</span>
<div class="a" style="left:459px;top:215px;width:87px;height:1.3px;background:#2a2a2a"></div>
<span class="a t" style="right:666.5px;top:229px;">付款帐户：</span>
<span class="a t" style="left:458px;top:228px;">现金</span>
<div class="a" style="left:457px;top:241px;width:87px;height:1.3px;background:#2a2a2a"></div>
<span class="a t" style="right:479px;top:201px;">手机：</span>
<div class="a" style="left:645px;top:215px;width:89px;height:1.3px;background:#2a2a2a"></div>
<span class="a t" style="right:477px;top:229px;">交易类型：</span>
<span class="a t" style="left:646px;top:228px;">现结</span>
<div class="a" style="left:645px;top:241px;width:89px;height:1.3px;background:#2a2a2a"></div>
<div class="a" style="left:174px;top:199px;width:17px;height:17px;background:linear-gradient(to bottom,#fafafa,#ececec);border:1px solid #9194aa;border-radius:.5px;box-shadow:inset 0 0 0 1px #fdfdfd"><span class="a" style="left:1.2px;top:1.2px;line-height:0"><svg width="12.6" height="12.6" viewBox="0 0 13 13" ><circle cx="4.4" cy="4.2" r="2.2" fill="#e9b98a"/><path d="M2 3.6 C2 1 6.8 1 6.8 3.6 C5.4 2.8 3.4 2.8 2 3.6Z" fill="#c8862c"/><path d="M0.8 11 C0.8 7.4 2.4 6.4 4.4 6.4 C6.4 6.4 7.6 7.4 7.6 11Z" fill="#4b94d8"/><circle cx="9" cy="4.4" r="2.2" fill="#e9b98a"/><path d="M6.6 4 C6.6 1.4 11.4 1.4 11.4 4 C10 3.2 8 3.2 6.6 4Z" fill="#3a3a3a"/><path d="M5.8 11.2 C5.8 7.6 7.2 6.6 9 6.6 C11 6.6 12.4 7.6 12.4 11.2Z" fill="#6a7078"/></svg></span></div>
<div class="a" style="left:196px;top:199px;width:17px;height:17px;background:linear-gradient(to bottom,#fafafa,#ececec);border:1px solid #9194aa;border-radius:.5px;box-shadow:inset 0 0 0 1px #fdfdfd"><span class="a" style="left:1.2px;top:1.2px;line-height:0"><svg width="12.6" height="12.6" viewBox="0 0 13 13" ><path d="M4.8 1.2 H8.2 V4.8 H11.8 V8.2 H8.2 V11.8 H4.8 V8.2 H1.2 V4.8 H4.8Z" fill="#40d23a" stroke="#38b830" stroke-width="0.6"/><path d="M5.6 2 H7.4 M2 5.6 H4.8" fill="none" stroke="#8cf080" stroke-width="0.9"/></svg></span></div>
<div class="a" style="left:174px;top:225px;width:17px;height:17px;background:linear-gradient(to bottom,#fafafa,#ececec);border:1px solid #9194aa;border-radius:.5px;box-shadow:inset 0 0 0 1px #fdfdfd"><span class="a" style="left:1.2px;top:1.2px;line-height:0"><svg width="12.6" height="12.6" viewBox="0 0 13 13" ><path d="M3.4 6.4 L8.6 5.2 L11.8 7.6 V12 H3.4Z" fill="#f2efe6" stroke="#c8c4b8" stroke-width="0.4"/><path d="M0.8 6.8 L5.2 1.6 L9.2 2.4 L12.6 7 L11.4 7.6 L8.6 4.6 L4.6 7.2Z" fill="#f0662a"/><path d="M0.8 6.8 L5.2 1.6 L6.4 2.6 L2.6 7.4Z" fill="#d8461a"/><path d="M5.2 1.6 L9.2 2.4 L8.6 4.6 L4.6 7.2 L2.6 7.4 L6.4 2.6Z" fill="#f88a3a"/><rect x="7" y="8" width="2.6" height="4" fill="#a0521e"/><rect x="3.8" y="8.2" width="2" height="1.8" fill="#9cc4ea"/></svg></span></div>
<div class="a" style="left:368px;top:225px;width:17px;height:17px;background:linear-gradient(to bottom,#fafafa,#ececec);border:1px solid #9194aa;border-radius:.5px;box-shadow:inset 0 0 0 1px #fdfdfd"><span class="a" style="left:1.2px;top:1.2px;line-height:0"><svg width="12.6" height="12.6" viewBox="0 0 13 13" ><circle cx="5.6" cy="4" r="3" fill="#f8c070"/><path d="M2.6 3.6 C2.8 0.2 8.4 0.2 8.6 3.6 C7 2.6 4.6 2.6 2.6 3.6Z" fill="#f49a20"/><path d="M0.8 12.6 C0.8 8.2 2.8 6.8 5.6 6.8 C8.4 6.8 10.2 8.2 10.2 12.6Z" fill="#2f66d6"/><path d="M6 9.4 L8.2 11.8 L12.4 6.4" fill="none" stroke="#2fae2f" stroke-width="2.2" stroke-linecap="round" stroke-linejoin="round"/></svg></span></div>
<div class="a" style="left:546px;top:225px;width:17px;height:17px;background:linear-gradient(to bottom,#fafafa,#ececec);border:1px solid #9194aa;border-radius:.5px;box-shadow:inset 0 0 0 1px #fdfdfd"><span class="a" style="left:1.2px;top:1.2px;line-height:0"><svg width="12.6" height="12.6" viewBox="0 0 13 13" ><circle cx="6.5" cy="3.4" r="2.4" fill="#f2c230"/><path d="M1.4 11.6 V8.4 C1.4 6.6 3.2 6.6 4.4 6.6 H8.6 C9.8 6.6 11.6 6.6 11.6 8.4 V11.6Z" fill="#f0b620"/><rect x="5" y="5" width="3" height="5" fill="#f6d05a"/><path d="M1.4 11.6 H11.6" stroke="#c98a10" stroke-width="0.9"/></svg></span></div>
<div class="a" style="left:15px;top:256px;width:1086.3px;height:320px;background:#fff;border-top:1px solid #5c6c8c;border-left:1px solid #6c7c9c;border-right:1px solid #6a7080"></div>
<div class="a" style="left:16px;top:257px;width:1069px;height:23px;background:#a9c5ef;border-bottom:3px solid #739ee4"></div>
<div class="a" style="left:38.5px;top:257px;width:1px;height:21px;background:#8db0e8"></div>
<span class="a t c" style="left:95.75px;top:261.7px;">产品编号</span>
<div class="a" style="left:152px;top:257px;width:1px;height:21px;background:#8db0e8"></div>
<span class="a t c" style="left:235px;top:261.7px;">名称</span>
<div class="a" style="left:317px;top:257px;width:1px;height:21px;background:#8db0e8"></div>
<span class="a t c" style="left:333.25px;top:261.7px;">单位</span>
<div class="a" style="left:348.5px;top:257px;width:1px;height:21px;background:#8db0e8"></div>
<span class="a t c" style="left:386px;top:261.7px;">规格</span>
<div class="a" style="left:422.5px;top:257px;width:1px;height:21px;background:#8db0e8"></div>
<span class="a t c" style="left:449.5px;top:261.7px;">品牌</span>
<div class="a" style="left:475.5px;top:257px;width:1px;height:21px;background:#8db0e8"></div>
<span class="a t c" style="left:514.75px;top:261.7px;">包装方式</span>
<div class="a" style="left:553px;top:257px;width:1px;height:21px;background:#8db0e8"></div>
<span class="a t c" style="left:578.75px;top:261.7px;">等级</span>
<div class="a" style="left:603.5px;top:257px;width:1px;height:21px;background:#8db0e8"></div>
<span class="a t c" style="left:642px;top:261.7px;">产地</span>
<div class="a" style="left:679.5px;top:257px;width:1px;height:21px;background:#8db0e8"></div>
<span class="a t c" style="left:706.5px;top:261.7px;">颜色</span>
<div class="a" style="left:732.5px;top:257px;width:1px;height:21px;background:#8db0e8"></div>
<span class="a t c" style="left:773.5px;top:261.7px;">仓库</span>
<div class="a" style="left:813.5px;top:257px;width:1px;height:21px;background:#8db0e8"></div>
<span class="a t c" style="left:852.5px;top:261.7px;">色号</span>
<div class="a" style="left:890.5px;top:257px;width:1px;height:21px;background:#8db0e8"></div>
<span class="a t c" style="left:922.65px;top:261.7px;">数量</span>
<div class="a" style="left:953.8px;top:257px;width:1px;height:21px;background:#8db0e8"></div>
<span class="a t c" style="left:985.9px;top:261.7px;">单价</span>
<div class="a" style="left:1017px;top:257px;width:1px;height:21px;background:#8db0e8"></div>
<span class="a t c" style="left:1058.75px;top:261.7px;">金额</span>
<span class="a t c" style="left:27.5px;top:283.9px;color:#1d1de0">1</span>
<span class="a t n" style="left:41px;top:283.9px;">00002</span>
<span class="a t" style="left:154px;top:283.9px;">内墙砖</span>
<span class="a t" style="left:319px;top:283.9px;">片</span>
<span class="a t n" style="left:351px;top:283.9px;">30X30</span>
<span class="a t" style="left:478px;top:283.9px;">11片/箱</span>
<span class="a t" style="left:735px;top:283.9px;">主仓库</span>
<span class="a t n" style="left:816px;top:283.9px;">1123</span>
<span class="a t" style="right:166.5px;top:283.9px;">100</span>
<span class="a t" style="right:104px;top:283.9px;">20.00</span>
<span class="a t" style="right:35.5px;top:283.9px;">2,000</span>
<div class="a" style="left:16px;top:302.3px;width:1069px;height:22.3px;background:#3583ea"></div>
<span class="a t c" style="left:27.5px;top:306.2px;color:#fff">2</span>
<span class="a t" style="right:166.5px;top:306.2px;color:#fff">0</span>
<span class="a t" style="right:104px;top:306.2px;color:#fff">0.00</span>
<span class="a t" style="right:35.5px;top:306.2px;color:#fff">0</span>
<span class="a t c" style="left:27.5px;top:328.5px;color:#1d1de0">3</span>
<span class="a t" style="right:166.5px;top:328.5px;color:#000">0</span>
<span class="a t" style="right:104px;top:328.5px;color:#000">0.00</span>
<span class="a t" style="right:35.5px;top:328.5px;color:#000">0</span>
<div class="a" style="left:16px;top:346.9px;width:1069px;height:22.3px;background:#f5f9fe"></div>
<span class="a t c" style="left:27.5px;top:350.8px;color:#1d1de0">4</span>
<span class="a t" style="right:166.5px;top:350.8px;color:#000">0</span>
<span class="a t" style="right:104px;top:350.8px;color:#000">0.00</span>
<span class="a t" style="right:35.5px;top:350.8px;color:#000">0</span>
<span class="a t c" style="left:27.5px;top:373.1px;color:#1d1de0">5</span>
<span class="a t" style="right:166.5px;top:373.1px;color:#000">0</span>
<span class="a t" style="right:104px;top:373.1px;color:#000">0.00</span>
<span class="a t" style="right:35.5px;top:373.1px;color:#000">0</span>
<div class="a" style="left:16px;top:391.5px;width:1069px;height:22.3px;background:#f5f9fe"></div>
<span class="a t c" style="left:27.5px;top:395.4px;color:#1d1de0">6</span>
<span class="a t" style="right:166.5px;top:395.4px;color:#000">0</span>
<span class="a t" style="right:104px;top:395.4px;color:#000">0.00</span>
<span class="a t" style="right:35.5px;top:395.4px;color:#000">0</span>
<span class="a t c" style="left:27.5px;top:417.7px;color:#1d1de0">7</span>
<span class="a t" style="right:166.5px;top:417.7px;color:#000">0</span>
<span class="a t" style="right:104px;top:417.7px;color:#000">0.00</span>
<span class="a t" style="right:35.5px;top:417.7px;color:#000">0</span>
<div class="a" style="left:16px;top:436.1px;width:1069px;height:22.3px;background:#f5f9fe"></div>
<span class="a t c" style="left:27.5px;top:440px;color:#1d1de0">8</span>
<span class="a t" style="right:166.5px;top:440px;color:#000">0</span>
<span class="a t" style="right:104px;top:440px;color:#000">0.00</span>
<span class="a t" style="right:35.5px;top:440px;color:#000">0</span>
<span class="a t c" style="left:27.5px;top:462.3px;color:#1d1de0">9</span>
<span class="a t" style="right:166.5px;top:462.3px;color:#000">0</span>
<span class="a t" style="right:104px;top:462.3px;color:#000">0.00</span>
<span class="a t" style="right:35.5px;top:462.3px;color:#000">0</span>
<div class="a" style="left:16px;top:480.7px;width:1069px;height:22.3px;background:#f5f9fe"></div>
<span class="a t c" style="left:27.5px;top:484.6px;color:#1d1de0">10</span>
<span class="a t" style="right:166.5px;top:484.6px;color:#000">0</span>
<span class="a t" style="right:104px;top:484.6px;color:#000">0.00</span>
<span class="a t" style="right:35.5px;top:484.6px;color:#000">0</span>
<span class="a t c" style="left:27.5px;top:506.9px;color:#1d1de0">11</span>
<span class="a t" style="right:166.5px;top:506.9px;color:#000">0</span>
<span class="a t" style="right:104px;top:506.9px;color:#000">0.00</span>
<span class="a t" style="right:35.5px;top:506.9px;color:#000">0</span>
<div class="a" style="left:16px;top:301.8px;width:1069px;height:1px;background:#8fb1ea"></div>
<div class="a" style="left:16px;top:324.1px;width:1069px;height:1px;background:#8fb1ea"></div>
<div class="a" style="left:16px;top:346.4px;width:1069px;height:1px;background:#8fb1ea"></div>
<div class="a" style="left:16px;top:368.7px;width:1069px;height:1px;background:#8fb1ea"></div>
<div class="a" style="left:16px;top:391px;width:1069px;height:1px;background:#8fb1ea"></div>
<div class="a" style="left:16px;top:413.3px;width:1069px;height:1px;background:#8fb1ea"></div>
<div class="a" style="left:16px;top:435.6px;width:1069px;height:1px;background:#8fb1ea"></div>
<div class="a" style="left:16px;top:457.9px;width:1069px;height:1px;background:#8fb1ea"></div>
<div class="a" style="left:16px;top:480.2px;width:1069px;height:1px;background:#8fb1ea"></div>
<div class="a" style="left:16px;top:502.5px;width:1069px;height:1px;background:#8fb1ea"></div>
<div class="a" style="left:16px;top:524.8px;width:1069px;height:1px;background:#8fb1ea"></div>
<div class="a" style="left:38.5px;top:280px;width:1px;height:245.3px;background:#96b6ec"></div>
<div class="a" style="left:152px;top:280px;width:1px;height:245.3px;background:#96b6ec"></div>
<div class="a" style="left:317px;top:280px;width:1px;height:245.3px;background:#96b6ec"></div>
<div class="a" style="left:348.5px;top:280px;width:1px;height:245.3px;background:#96b6ec"></div>
<div class="a" style="left:422.5px;top:280px;width:1px;height:245.3px;background:#96b6ec"></div>
<div class="a" style="left:475.5px;top:280px;width:1px;height:245.3px;background:#96b6ec"></div>
<div class="a" style="left:553px;top:280px;width:1px;height:245.3px;background:#96b6ec"></div>
<div class="a" style="left:603.5px;top:280px;width:1px;height:245.3px;background:#96b6ec"></div>
<div class="a" style="left:679.5px;top:280px;width:1px;height:245.3px;background:#96b6ec"></div>
<div class="a" style="left:732.5px;top:280px;width:1px;height:245.3px;background:#96b6ec"></div>
<div class="a" style="left:813.5px;top:280px;width:1px;height:245.3px;background:#96b6ec"></div>
<div class="a" style="left:890.5px;top:280px;width:1px;height:245.3px;background:#96b6ec"></div>
<div class="a" style="left:953.8px;top:280px;width:1px;height:245.3px;background:#96b6ec"></div>
<div class="a" style="left:1017px;top:280px;width:1px;height:245.3px;background:#96b6ec"></div>
<div class="a" style="left:40px;top:302.8px;width:112.5px;height:21.5px;background:#f2f7fe;border:1px solid #111;border-right-color:#555;border-bottom-color:#3b6fc4"></div>
<div class="a" style="left:137px;top:304.3px;width:14.5px;height:19px;background:linear-gradient(to bottom,#f4f4f4,#d9d9d9);border:1px solid #fff;border-right-color:#777;border-bottom-color:#777"></div>
<span class="a" style="left:141px;top:312.1px;line-height:0"><svg width="6.2" height="3.5" viewBox="0 0 6.2 3.5"><path d="M0 0 H6.2 L3.1 3.5Z" fill="#000"/></svg></span>
<div class="a" style="left:42px;top:306.3px;width:1px;height:15px;background:#000"></div>
<div class="a" style="left:16px;top:532.5px;width:1069px;height:27px;background:#abc7f0"></div>
<span class="a t" style="left:78px;top:539px;font-weight:bold;color:#8e1b1b;letter-spacing:.9px">合计：</span>
<span class="a t" style="right:166px;top:539px;font-weight:bold;color:#8e1b1b">100</span>
<span class="a t" style="right:35.5px;top:539px;font-weight:bold;color:#8e1b1b">2,000</span>
<div class="a" style="left:16px;top:559.3px;width:1069px;height:16.2px;background:linear-gradient(to bottom,#e3e3e3,#f1f1f1 40%,#ececec)"></div>
<div class="a" style="left:15.5px;top:559.3px;width:9.3px;height:16.2px;background:#6b6b6b"></div>
<div class="a" style="left:42px;top:560.5px;width:544px;height:14px;border:1px solid #989898;border-radius:2.5px;background:linear-gradient(to bottom,#f5f5f5 0,#e6e6e6 45%,#cfcfcf 50%,#c6c6c6 100%)"></div>
<div class="a" style="left:310.5px;top:564px;width:1px;height:7px;background:#555"></div>
<div class="a" style="left:312.7px;top:564px;width:1px;height:7px;background:#555"></div>
<div class="a" style="left:314.9px;top:564px;width:1px;height:7px;background:#555"></div>
<span class="a" style="left:29.5px;top:563.9px;line-height:0"><svg width="4" height="7" viewBox="0 0 4 7"><path d="M4 0 V7 L0 3.5Z" fill="#333"/></svg></span>
<span class="a" style="left:1075.6px;top:563.9px;line-height:0"><svg width="4" height="7" viewBox="0 0 4 7"><path d="M0 0 V7 L4 3.5Z" fill="#333"/></svg></span>
<div class="a" style="left:1085px;top:257px;width:15.5px;height:302.5px;background:linear-gradient(to right,#e3e3e3,#f1f1f1 40%,#ececec)"></div>
<div class="a" style="left:1086px;top:274px;width:14px;height:98px;border:1px solid #a4a4a4;border-radius:2.5px;background:linear-gradient(to right,#f3f3f3 0,#e2e2e2 45%,#cdcdcd 50%,#c2c2c2 100%)"></div>
<div class="a" style="left:1089.5px;top:319.5px;width:7px;height:1px;background:#555"></div>
<div class="a" style="left:1089.5px;top:321.7px;width:7px;height:1px;background:#555"></div>
<div class="a" style="left:1089.5px;top:323.9px;width:7px;height:1px;background:#555"></div>
<span class="a" style="left:1089.7px;top:263.6px;line-height:0"><svg width="7" height="4" viewBox="0 0 7 4"><path d="M0 4 H7 L3.5 0Z" fill="#333"/></svg></span>
<span class="a" style="left:1089.7px;top:549.6px;line-height:0"><svg width="7" height="4" viewBox="0 0 7 4"><path d="M0 0 H7 L3.5 4Z" fill="#333"/></svg></span>
<div class="a" style="left:1085px;top:559.3px;width:15.5px;height:16.2px;background:#c9c9c9"></div>
<div class="a" style="left:15px;top:583px;width:1086.3px;height:78.5px;background:#fff;border:1px solid #7a8290;border-top-color:#686c74"></div>
<span class="a t" style="right:1062px;top:589px;">应付：</span>
<span class="a t" style="left:59px;top:588px;">2,000.00</span>
<div class="a" style="left:58px;top:602px;width:128px;height:1.3px;background:#2a2a2a"></div>
<span class="a t" style="right:1062px;top:614px;">杂费：</span>
<span class="a t" style="left:59px;top:613px;">0.00</span>
<div class="a" style="left:58px;top:627px;width:127px;height:1.3px;background:#2a2a2a"></div>
<span class="a t" style="right:1062px;top:642px;">备注：</span>
<div class="a" style="left:57px;top:654.5px;width:679px;height:1.3px;background:#2a2a2a"></div>
<span class="a t" style="right:838px;top:589px;">预付：</span>
<span class="a t" style="left:282px;top:588px;">0.00</span>
<div class="a" style="left:281px;top:602px;width:121px;height:1.3px;background:#2a2a2a"></div>
<span class="a t" style="right:838px;top:615.5px;">优惠：</span>
<span class="a t" style="left:283px;top:614.5px;">0.00</span>
<div class="a" style="left:282px;top:629px;width:119px;height:1.3px;background:#2a2a2a"></div>
<span class="a t" style="right:633px;top:589px;">运费：</span>
<span class="a t" style="left:490px;top:588px;">0.00</span>
<div class="a" style="left:489px;top:602px;width:113px;height:1.3px;background:#2a2a2a"></div>
<span class="a t" style="right:632px;top:617px;color:#f01818;">付现：</span>
<span class="a t" style="left:490px;top:616px;color:#f01818;">2,000.00</span>
<div class="a" style="left:489px;top:631px;width:113px;height:1.3px;background:#2a2a2a"></div>
<span class="a t" style="left:627.5px;top:589.5px;letter-spacing:.6px">制单</span>
<span class="a t" style="left:651px;top:589.5px;font-weight:bold">:</span>
<span class="a t" style="right:1120px;top:589.5px;"></span>
<span class="a t" style="left:657px;top:588.5px;">管理员</span>
<div class="a" style="left:656px;top:602px;width:78px;height:1.3px;background:#2a2a2a"></div>
<span class="a t" style="left:628.5px;top:617.5px;letter-spacing:.6px">审核</span>
<span class="a t" style="left:652px;top:617.5px;font-weight:bold">:</span>
<span class="a t" style="right:1120px;top:617.5px;"></span>
<div class="a" style="left:657px;top:631px;width:77px;height:1.3px;background:#2a2a2a"></div>
<div class="a" style="left:406px;top:587px;width:17px;height:17px;background:linear-gradient(to bottom,#fafafa,#ececec);border:1px solid #9194aa;border-radius:.5px;box-shadow:inset 0 0 0 1px #fdfdfd"><span class="a" style="left:1.2px;top:1.2px;line-height:0"><svg width="12.6" height="12.6" viewBox="0 0 13 13" ><path d="M2.4 2 L6.5 7 L10.6 2 M6.5 7 V11.6 M3 7.2 H10 M3 9.6 H10" fill="none" stroke="#4f9a1c" stroke-width="3" stroke-linejoin="round"/><path d="M2.4 2 L6.5 7 L10.6 2 M6.5 7 V11.6 M3.4 7.2 H9.6 M3.4 9.6 H9.6" fill="none" stroke="#86cc3a" stroke-width="1.6"/></svg></span></div>
<div class="a" style="left:8px;top:671px;width:1102.7px;height:1px;background:#9dbcec"></div>
<div class="a" style="left:8px;top:672px;width:1102.7px;height:1.4px;background:#7b9ad4"></div>
<div class="a" style="left:8px;top:673.3px;width:1102.7px;height:1.5px;background:#cdd1d8"></div>
<div class="a" style="left:8px;top:674.8px;width:1102.7px;height:1.2px;background:#7f858c"></div>
<div class="a" style="left:8px;top:676px;width:1102.7px;height:1px;background:#7ba4e4"></div>
<div class="a" style="left:8px;top:676.5px;width:1102.7px;height:16px;background:#7ba4e4"></div>
<div class="a" style="left:8px;top:692.6px;width:1096px;height:1px;background:#e4edfb"></div>
<div class="a" style="left:1110.8px;top:672px;width:1.3px;height:24px;background:#f2f6fd"></div>
<div class="a" style="left:8px;top:676.6px;width:1096px;height:0.9px;background:rgba(130,135,130,.55)"></div>
<div class="a" style="left:8px;top:676.5px;width:1.2px;height:17px;background:#8a8a86"></div>
<div class="a" style="left:108.7px;top:676.5px;width:1.2px;height:16.5px;background:#edf3fc"></div>
<div class="a" style="left:111.5px;top:676.2px;width:1px;height:16.5px;background:#8391ad"></div>
<div class="a" style="left:106.9px;top:676.5px;width:1px;height:16px;background:rgba(90,120,185,.45)"></div>
<div class="a" style="left:340.7px;top:676.5px;width:1.2px;height:16.5px;background:#edf3fc"></div>
<div class="a" style="left:343.5px;top:676.2px;width:1px;height:16.5px;background:#8391ad"></div>
<div class="a" style="left:338.9px;top:676.5px;width:1px;height:16px;background:rgba(90,120,185,.45)"></div>
<div class="a" style="left:602.7px;top:676.5px;width:1.2px;height:16.5px;background:#edf3fc"></div>
<div class="a" style="left:605.5px;top:676.2px;width:1px;height:16.5px;background:#8391ad"></div>
<div class="a" style="left:600.9px;top:676.5px;width:1px;height:16px;background:rgba(90,120,185,.45)"></div>
<div class="a" style="left:827.9px;top:676.5px;width:1.2px;height:16.5px;background:#edf3fc"></div>
<div class="a" style="left:830.7px;top:676.2px;width:1px;height:16.5px;background:#8391ad"></div>
<div class="a" style="left:826.1px;top:676.5px;width:1px;height:16px;background:rgba(90,120,185,.45)"></div>
<span class="a" style="left:12.5px;top:678px;line-height:0"><svg width="15.4" height="14.4" viewBox="0 0 15.4 14.4" ><circle cx="5" cy="2.4" r="2.2" fill="#3aa0e8"/><path d="M1.6 8.4 C1.6 5.4 3 4.4 5 4.4 C7 4.4 8.4 5.4 8.4 8.4Z" fill="#2b86d8"/><circle cx="3.4" cy="7.4" r="2" fill="#3aa0e8"/><path d="M0.2 12.6 C0.2 10 1.6 9.2 3.4 9.2 C5.2 9.2 6.6 10 6.6 12.6Z" fill="#1f72c8"/><circle cx="10.4" cy="5" r="2.7" fill="#6ad02e"/><ellipse cx="9.8" cy="4.2" rx="1.2" ry="0.9" fill="#b6f08a"/><path d="M5.8 14 C5.8 9.6 7.8 8.2 10.4 8.2 C13 8.2 15 9.6 15 14 C12 14.8 8.6 14.8 5.8 14Z" fill="#3fae18"/><path d="M7.4 10.6 C8.4 9.2 12.4 9.2 13.4 10.6" fill="none" stroke="#8ee060" stroke-width="0.8"/></svg></span>
<span class="a t" style="left:30px;top:677.9px;">管理员</span>
<span class="a" style="left:113.6px;top:678.3px;line-height:0"><svg width="24.5" height="14" viewBox="0 0 23 14" preserveAspectRatio="none"><path d="M0.6 7 L4 3 L3.6 0.8 L7 2 L11.6 0.4 L16 2 L19.4 0.8 L19 3 L22.4 7 L19 11 L19.4 13.2 L16 12 L11.6 13.6 L7 12 L3.6 13.2 L4 11Z" fill="#f4c430" stroke="#e0a010" stroke-width="0.6"/><ellipse cx="11.5" cy="7" rx="7.2" ry="4.8" fill="#d81e1e" stroke="#fbe08a" stroke-width="0.8"/><text x="11.5" y="9.2" font-family="Liberation Sans,sans-serif" font-size="5.6" font-weight="bold" fill="#fff" text-anchor="middle">VIP</text></svg></span>
<span class="a" style="left:345.5px;top:677px;line-height:0"><svg width="18" height="16" viewBox="0 0 18 16" ><rect x="10.4" y="4.4" width="7" height="11.2" fill="#f89a28"/><rect x="10.4" y="4.4" width="7" height="11.2" fill="none" stroke="#f06a18" stroke-width="0.7"/><path d="M12.4 6.4 H15.8 M12.4 8.6 H15.8 M12.4 10.8 H15.8" stroke="#fbd070" stroke-width="0.9"/><circle cx="7" cy="9" r="5.8" fill="#f8ec68"/><path d="M1.4 11 C-0.6 4 3 0.2 7 0.2 C10.4 0.2 12.4 2.2 12.6 4.6 C10 4.6 8.6 3.8 7.6 2.8 C6.6 5.6 4 7 2.6 7.6 C2 8.6 1.8 9.8 1.4 11Z" fill="#7a2a1c"/><ellipse cx="5" cy="8" rx="0.8" ry="1.2" fill="#2a3cb0"/><ellipse cx="9" cy="8" rx="0.8" ry="1.2" fill="#2a3cb0"/><ellipse cx="7" cy="11.8" rx="1.8" ry="0.8" fill="#f0203a"/></svg></span>
<span class="a" style="left:608px;top:677.5px;line-height:0"><svg width="13.6" height="13.6" viewBox="0 0 13.6 13.6" ><circle cx="6.8" cy="6.8" r="6.5" fill="#cdd8ea"/><circle cx="6.8" cy="6.8" r="6.5" fill="none" stroke="#b4c2da" stroke-width="0.6"/><path d="M1.6 6 C2.4 4 4 4.2 4.4 5.6 C4.8 7.2 4.6 9 3.4 9.6 C2 9.2 1.2 7.6 1.6 6Z" fill="#2f7fd8"/><path d="M8.6 5.4 C9.6 4.2 11.6 4.6 12 6.4 C12.2 8 11.4 9.4 10 9.6 C8.8 9 8 7 8.6 5.4Z" fill="#2f7fd8"/><path d="M5.6 3 C6.4 2.2 7.6 2.4 7.8 3.6 C8 5 7.2 6.4 6.2 6.2 C5.4 5.6 5 4 5.6 3Z" fill="#e8708a"/><path d="M4.6 9.6 C6 8.8 8 9 8.8 10 C8.2 11.6 5.8 12 4.6 9.6Z" fill="#7fe0e8"/><path d="M2.4 3 C4 1 9.6 1 11.2 3" fill="none" stroke="#f4f7fc" stroke-width="1.2"/></svg></span>
<span class="a t" style="left:626px;top:677.9px;letter-spacing:-.55px">2021年9月27日</span>
<span class="a t" style="left:709px;top:677.9px;">星期一</span>
<span class="a t" style="left:761.5px;top:677.9px;letter-spacing:-.15px">15:30:16</span>
<span class="a" style="left:833.6px;top:679.3px;line-height:0"><svg width="14.2" height="12.6" viewBox="0 0 14.2 12.6" ><path d="M2.2 6.4 L9 4.6 L13.4 7.4 V12.4 H2.2Z" fill="#f6f0e0"/><path d="M2.2 6.8 L6.4 8 V12.4 H2.2Z" fill="#e6e0d2"/><path d="M0.2 6.6 L5 0.8 L9.8 1.6 L14 7 L12.8 7.8 L9.4 4.2 L6.2 8.2Z" fill="#f26a22"/><path d="M0.2 6.6 L5 0.8 L7 2 L2.4 7.6Z" fill="#d8401a"/><path d="M5 0.8 L9.8 1.6 L9.4 4.2 L6.2 8.2 L2.4 7.6 L7 2Z" fill="#f8843a"/><path d="M8.6 8.2 Q10 6.8 11.2 8.2 V12.4 H8.6Z" fill="#a04a1a"/><rect x="3" y="8.6" width="2.2" height="2" fill="#a8c8ea"/><rect x="5.6" y="0.2" width="1.6" height="1.6" fill="#e8eef8"/></svg></span>
<span class="a t" style="left:851.5px;top:678.4px;font-weight:bold;color:#1111ee;letter-spacing:.4px">版本号：2.5 单机版</span>
</body></html>
